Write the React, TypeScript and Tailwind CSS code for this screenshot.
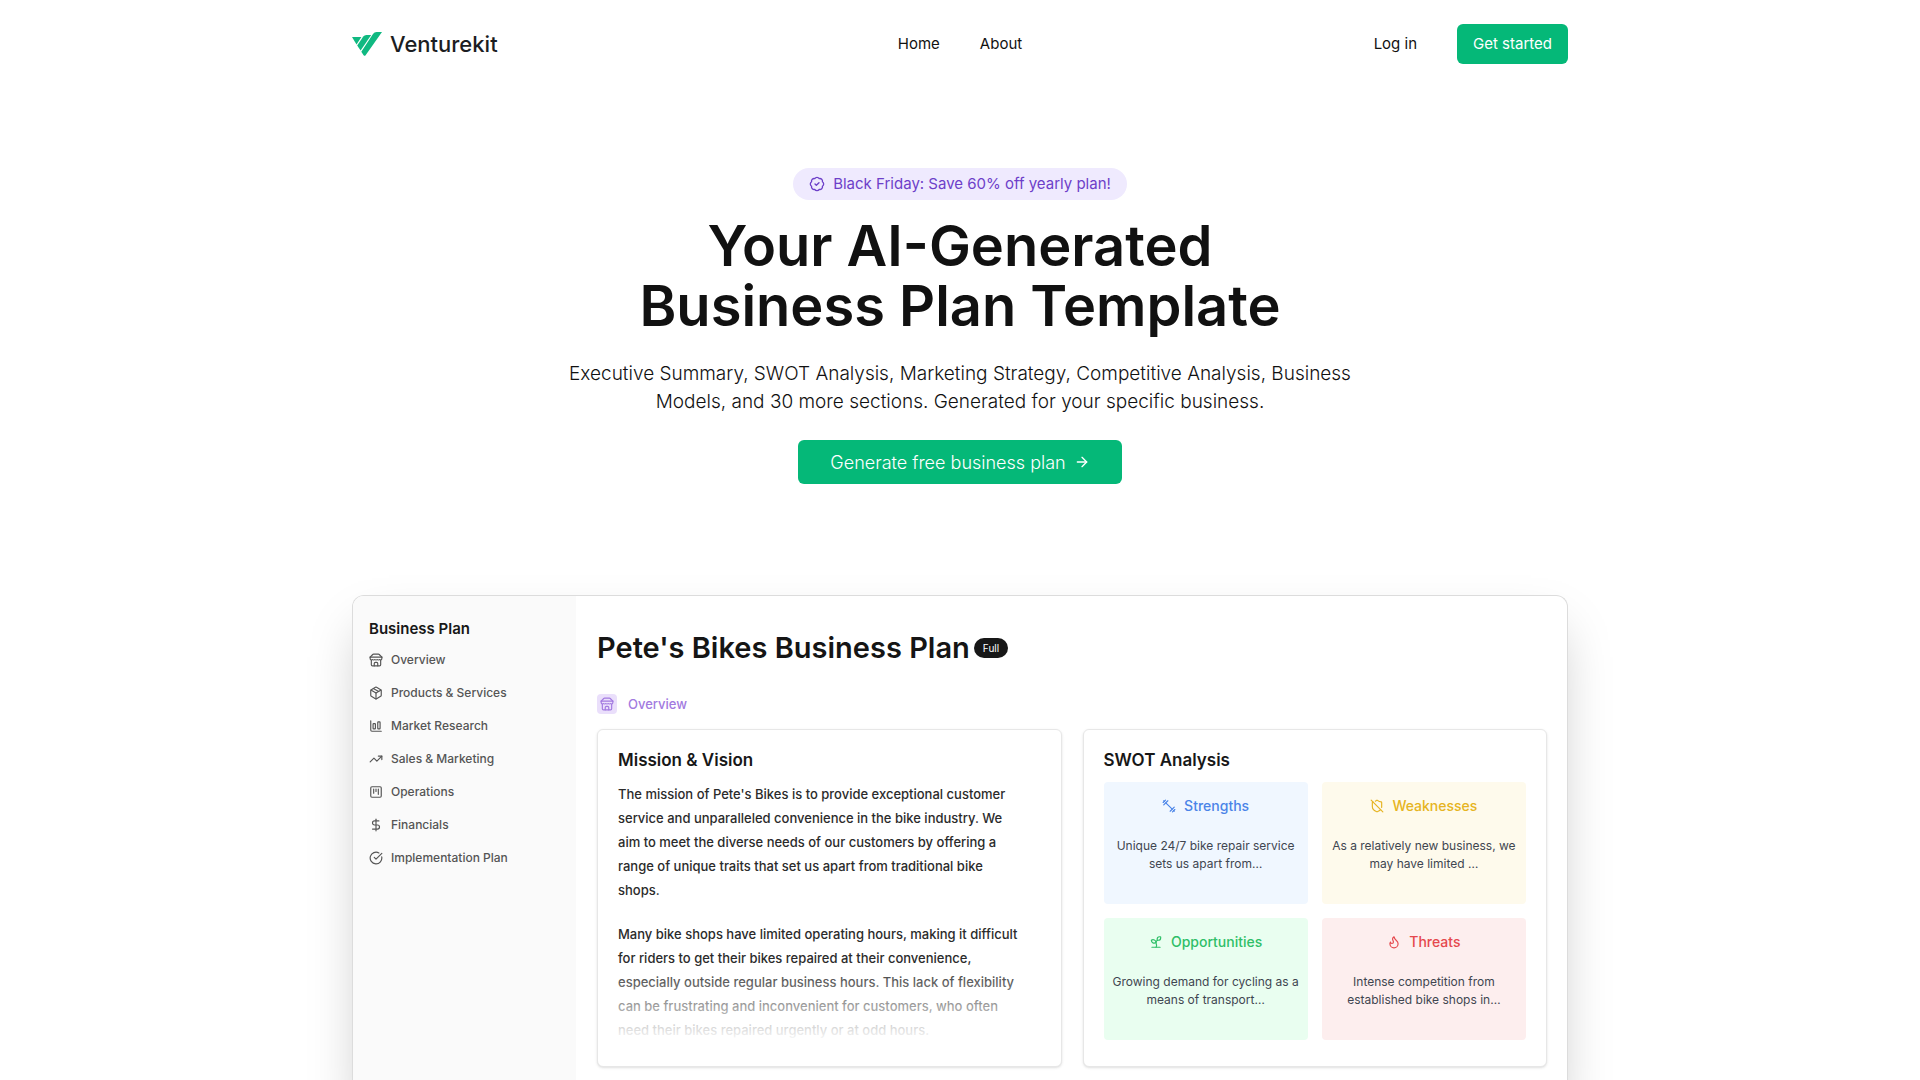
import type { ComponentType, ReactNode, SVGProps } from "react";
import {
  ArrowRight,
  BadgeCheck,
  ChartColumnBig,
  CircleCheckBig,
  DollarSign,
  Flame,
  Package,
  ShieldOff,
  Sprout,
  SquareKanban,
  TrendingUp,
} from "lucide-react";

type Icon = ComponentType<{ className?: string; "aria-hidden"?: boolean }>;

function StrokeIcon(props: SVGProps<SVGSVGElement>) {
  return (
    <svg
      viewBox="0 0 24 24"
      fill="none"
      stroke="currentColor"
      strokeWidth={2}
      strokeLinecap="round"
      strokeLinejoin="round"
      {...props}
    />
  );
}

function StoreIcon({ className }: { className?: string }) {
  return (
    <StrokeIcon className={className} aria-hidden>
      <path d="m2 7 4.41-4.41A2 2 0 0 1 7.83 2h8.34a2 2 0 0 1 1.42.59L22 7" />
      <path d="M4 12v8a2 2 0 0 0 2 2h12a2 2 0 0 0 2-2v-8" />
      <path d="M15 22v-4a2 2 0 0 0-2-2h-2a2 2 0 0 0-2 2v4" />
      <path d="M2 7h20" />
      <path d="M22 7v3a2 2 0 0 1-2 2a2.7 2.7 0 0 1-1.59-.63.7.7 0 0 0-.82 0A2.7 2.7 0 0 1 16 12a2.7 2.7 0 0 1-1.59-.63.7.7 0 0 0-.82 0A2.7 2.7 0 0 1 12 12a2.7 2.7 0 0 1-1.59-.63.7.7 0 0 0-.82 0A2.7 2.7 0 0 1 8 12a2.7 2.7 0 0 1-1.59-.63.7.7 0 0 0-.82 0A2.7 2.7 0 0 1 4 12a2 2 0 0 1-2-2V7" />
    </StrokeIcon>
  );
}

function DumbbellIcon({ className }: { className?: string }) {
  return (
    <StrokeIcon className={className} aria-hidden>
      <path d="m6.5 6.5 11 11" />
      <path d="m21 21-1-1" />
      <path d="m3 3 1 1" />
      <path d="m18 22 4-4" />
      <path d="m2 6 4-4" />
      <path d="m3 10 7-7" />
      <path d="m14 21 7-7" />
    </StrokeIcon>
  );
}

function Logo() {
  return (
    <a href="#" className="flex items-center gap-2 text-[#1b1d22]">
      <svg viewBox="0 0 30 24" className="h-6 w-[30px]" fill="#10b981" aria-hidden>
        <path d="M0 5H9.4L4.5 12.4Z" />
        <path d="M5.2 13.5 11.3 4.6Q12.4 3 14.4 3H19.2L8.6 18.6Z" />
        <path d="M9.3 19.7 21 2Q22.3 0 24.6 0H30L13.6 23.2Q12.6 24.5 11.6 23.2Z" />
      </svg>
      <span className="text-[22px] leading-6 font-medium">Venturekit</span>
    </a>
  );
}

const sections: { label: string; icon: Icon }[] = [
  { label: "Overview", icon: StoreIcon },
  { label: "Products & Services", icon: Package },
  { label: "Market Research", icon: ChartColumnBig },
  { label: "Sales & Marketing", icon: TrendingUp },
  { label: "Operations", icon: SquareKanban },
  { label: "Financials", icon: DollarSign },
  { label: "Implementation Plan", icon: CircleCheckBig },
];

const swot: { title: string; icon: Icon; tile: string; tint: string; lines: string[] }[] = [
  {
    title: "Strengths",
    icon: DumbbellIcon,
    tile: "bg-[#f0f7ff]",
    tint: "text-[#4a84e8]",
    lines: ["Unique 24/7 bike repair service", "sets us apart from…"],
  },
  {
    title: "Weaknesses",
    icon: ShieldOff,
    tile: "bg-[#fefaec]",
    tint: "text-[#e6b422]",
    lines: ["As a relatively new business, we", "may have limited …"],
  },
  {
    title: "Opportunities",
    icon: Sprout,
    tile: "bg-[#e9fef0]",
    tint: "text-[#2fbf68]",
    lines: ["Growing demand for cycling as a", "means of transport…"],
  },
  {
    title: "Threats",
    icon: Flame,
    tile: "bg-[#fdeeee]",
    tint: "text-[#e5484d]",
    lines: ["Intense competition from", "established bike shops in…"],
  },
];

const mission = [
  [
    "The mission of Pete's Bikes is to provide exceptional customer",
    "service and unparalleled convenience in the bike industry. We",
    "aim to meet the diverse needs of our customers by offering a",
    "range of unique traits that set us apart from traditional bike",
    "shops.",
  ],
  [
    "Many bike shops have limited operating hours, making it difficult",
    "for riders to get their bikes repaired at their convenience,",
    "especially outside regular business hours. This lack of flexibility",
    "can be frustrating and inconvenient for customers, who often",
    "need their bikes repaired urgently or at odd hours.",
  ],
];

function Lines({ lines }: { lines: string[] }) {
  return (
    <>
      {lines.map((line) => (
        <span key={line} className="block whitespace-nowrap">
          {line}{" "}
        </span>
      ))}
    </>
  );
}

function Card({ title, children }: { title: string; children: ReactNode }) {
  return (
    <section className="min-w-0 flex-1 rounded-md border border-[#e7e7e7] bg-white px-5 pt-5 pb-6 shadow-sm">
      <h3 className="text-[17px] leading-5 font-semibold text-[#171717]">{title}</h3>
      {children}
    </section>
  );
}

function Header() {
  return (
    <header className="flex h-[88px] items-center justify-between text-[15px] text-[#111]">
      <div className="flex flex-1">
        <Logo />
      </div>
      <nav className="flex gap-10">
        <a href="#">Home</a>
        <a href="#about">About</a>
      </nav>
      <div className="flex flex-1 items-center justify-end gap-10">
        <a href="#login">Log in</a>
        <button type="button" className="h-10 rounded-md bg-[#05b878] px-4 text-white">
          Get started
        </button>
      </div>
    </header>
  );
}

function Hero() {
  return (
    <div className="flex flex-col items-center pt-20 text-center">
      <p className="flex h-8 items-center gap-2 rounded-full bg-[#efeafe] px-4 text-[15px] text-[#6d3fc9]">
        <BadgeCheck className="size-4" aria-hidden />
        Black Friday: Save 60% off yearly plan!
      </p>
      <h1 className="mt-4 text-[56px] leading-[60px] font-semibold text-[#111]">
        Your AI-Generated
        <br />
        Business Plan Template
      </h1>
      <p className="mt-6 text-[19px] leading-7 font-light text-[#111]">
        Executive Summary, SWOT Analysis, Marketing Strategy, Competitive Analysis, Business
        <br />
        Models, and 30 more sections. Generated for your specific business.
      </p>
      <button
        type="button"
        className="mt-6 flex h-11 items-center gap-2 rounded-md bg-[#05b878] px-8 text-[18px] font-light text-white"
      >
        Generate free business plan
        <ArrowRight className="size-4" aria-hidden />
      </button>
    </div>
  );
}

function PlanPreview() {
  return (
    <div className="mt-[111px] flex overflow-hidden rounded-t-xl border border-b-0 border-[#dcdcdc] bg-white shadow-2xl">
      <aside className="w-[223px] shrink-0 bg-[#fafafa] px-4 pt-6">
        <h2 className="text-[15px] leading-[18px] font-semibold text-[#171717]">Business Plan</h2>
        <ul className="mt-[5px] text-[12px] font-medium text-[#555]">
          {sections.map(({ label, icon: ItemIcon }) => (
            <li key={label}>
              <a href="#plan" className="flex h-[33px] items-center gap-2">
                <ItemIcon className="size-[14px]" aria-hidden />
                {label}
              </a>
            </li>
          ))}
        </ul>
      </aside>
      <div className="min-w-0 flex-1 pt-8 pr-5 pb-10 pl-[21px]">
        <div className="flex h-10 items-center gap-1">
          <h2 className="text-[29px] leading-10 font-semibold text-[#151515]">
            Pete's Bikes Business Plan
          </h2>
          <span className="rounded-full bg-[#171717] px-[9px] text-[10px] leading-5 text-white">
            Full
          </span>
        </div>
        <div className="mt-[26px] flex items-center gap-[11px] text-[13px] leading-5 font-medium text-[#a27ae0]">
          <span className="flex size-5 items-center justify-center rounded-sm bg-[#eadffb]">
            <StoreIcon className="size-[14px]" />
          </span>
          Overview
        </div>
        <div className="mt-[15px] flex gap-[21px]">
          <Card title="Mission & Vision">
            <div className="relative mt-3 flex flex-col gap-5 text-[13px] leading-6 font-medium text-[#2b2b2b]">
              {mission.map((paragraph) => (
                <p key={paragraph[0]}>
                  <Lines lines={paragraph} />
                </p>
              ))}
              <div className="absolute inset-x-0 bottom-0 h-20 bg-linear-to-b from-transparent to-white" />
            </div>
          </Card>
          <Card title="SWOT Analysis">
            <div className="mt-3 grid grid-cols-2 gap-[14px]">
              {swot.map(({ title, icon: TileIcon, tile, tint, lines }) => (
                <div
                  key={title}
                  className={"h-[122px] rounded-sm pt-[14px] text-center " + tile}
                >
                  <h4
                    className={
                      "flex items-center justify-center gap-2 text-[14px] leading-5 font-medium " +
                      tint
                    }
                  >
                    <TileIcon className="size-[14px]" aria-hidden />
                    {title}
                  </h4>
                  <p className="mt-[21px] flex flex-col items-center text-[12px] leading-[18px] text-[#3f4650]">
                    <Lines lines={lines} />
                  </p>
                </div>
              ))}
            </div>
          </Card>
        </div>
      </div>
    </div>
  );
}

export default function App() {
  return (
    <main className="h-screen overflow-hidden bg-white px-8 font-[Inter,sans-serif]">
      <div className="mx-auto max-w-[1216px]">
        <Header />
        <Hero />
        <PlanPreview />
      </div>
    </main>
  );
}
